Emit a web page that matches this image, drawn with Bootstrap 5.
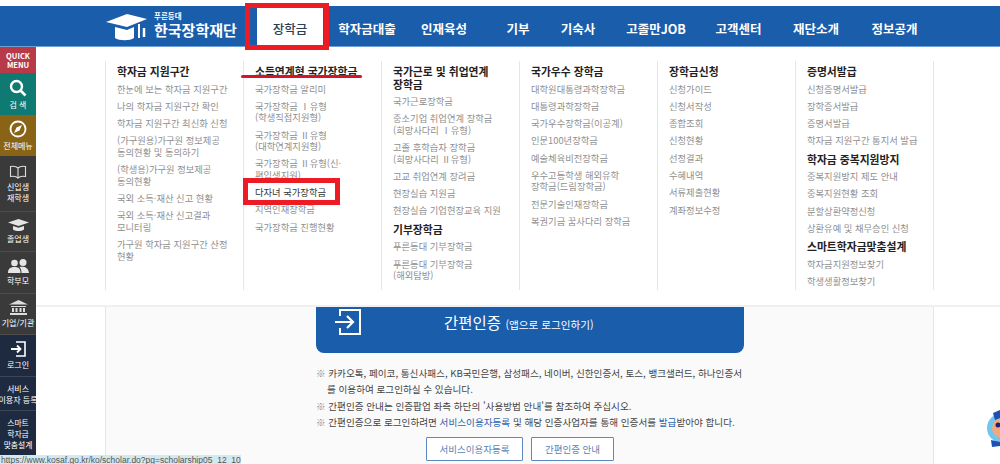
<!DOCTYPE html>
<html lang="ko">
<head>
<meta charset="utf-8">
<title>한국장학재단</title>
<link href="https://cdn.jsdelivr.net/npm/bootstrap@5.3.0/dist/css/bootstrap.min.css" rel="stylesheet">
<style>
html,body{height:464px;overflow:hidden;background:#fff}
body{font-family:"Noto Sans CJK KR","Noto Sans",sans-serif;color:#333}
.ks-top{height:41px;margin-top:6px;background:#1a5dab;border-bottom:1px solid #6f9fd8}
.ks-logo{width:257px;padding-left:106px;color:#fff}
.ks-logo-sub{font-size:7.500px;font-weight:700;line-height:7px;margin-top:6px}
.ks-logo-main{font-size:15px;font-weight:700;line-height:16px;margin-top:3px;white-space:nowrap}
.ks-gnb{display:grid;grid-template-columns:66px 88px 66px 82px 38px 118px 47px 108px 49px}
.ks-gnb a{color:#fff;font-size:12.500px;font-weight:700;text-decoration:none;text-align:center;line-height:46px;white-space:nowrap}
.ks-gnb a.ks-on{background:#fff;color:#2c3e55;font-weight:500}
.ks-side{width:36px;height:408px;flex:none}
.ks-side a{display:flex;flex-direction:column;align-items:center;justify-content:center;color:#fff;text-decoration:none;font-size:8px;line-height:11px;text-align:center;white-space:nowrap;border-bottom:1px solid #4c4c4c}
.ks-q{height:26px;background:#b83a49;font-weight:700;font-size:7.500px!important;line-height:9px!important;border:0!important}
.ks-find{height:42px;background:#0f7a72;border:0!important}
.ks-all{height:41px;background:#8a6416;border:0!important}
.ks-d1{height:56px;background:#3a3a3a}
.ks-d2{height:40px;background:#3a3a3a}
.ks-d3{height:42px;background:#3a3a3a}
.ks-d4{height:41px;background:#3a3a3a}
.ks-n1{height:42px;background:#1e2a40;border-color:#3b4658!important}
.ks-n2{height:34px;background:#1e2a40;border-color:#3b4658!important}
.ks-n3{height:44px;background:#1e2a40;border:0!important;font-size:7.800px!important}
.ks-side svg{display:block;margin-bottom:2px}
.ks-main{width:964px;flex:none}
.ks-mega{height:260px;padding:14px 0 0 69px;border-bottom:2px solid #f0f0f0}
.ks-col{width:138px;height:229px;flex:none;padding:4px 4px 0 11px;border-left:1px solid #e6e6e6;font-size:9.300px;line-height:11.500px;color:#8f8f8f}
.ks-col:last-child{border-right:1px solid #e6e6e6;width:139px}
.ks-col h6{font-size:10.800px;font-weight:700;line-height:12.500px;color:#222;margin:0 0 6px;white-space:nowrap}
.ks-col li{margin-bottom:5.800px;white-space:nowrap}
.ks-col li.ks-dark{color:#333}
.ks-body{margin-left:69px;width:829px;height:157px;background:#fafafa;border-left:1px solid #e6e6e6;border-right:1px solid #e6e6e6;padding-left:210px}
.ks-cert{width:428px;height:46px;background:#1a5dab;border-radius:0 0 8px 8px;color:#fff;padding-left:18px;text-decoration:none}
.ks-cert-t{font-size:15.500px;margin-left:82px;line-height:20px;margin-bottom:13px}
.ks-cert-t span{font-size:10.600px}
.ks-notes{width:440px;margin:12px 0 0;font-size:9.600px;line-height:16.300px;color:#444;white-space:nowrap}
.ks-notes li{padding-left:11px;text-indent:-11px}
.ks-notes i{font-style:normal;color:#888}
.ks-notes b{font-weight:400;color:#2a64b0}
.ks-btns{margin-top:7px;padding-left:110px}
.ks-btn{height:24px;padding:0;border:1px solid #5d88c0;border-radius:1px;background:#fff;color:#5a7fb5;font-size:9.500px;line-height:22px}
.ks-w1{width:97px}.ks-w2{width:83px}
.ks-red{position:absolute;border:5px solid #ed1c24;pointer-events:none}
.ks-r1{left:245px;top:3px;width:84px;height:47px}
.ks-r2{left:243px;top:178px;width:97px;height:27px}
.ks-line{position:absolute;left:241px;top:75px;width:121px;height:3px;background:#d8122a;border-radius:2px}
.ks-status{position:fixed;left:0;bottom:0;width:241px;height:9px;background:#d3e8ef;color:#555;font-size:8.500px;line-height:11px;padding-left:1px;overflow:hidden;white-space:nowrap;font-family:"Liberation Sans",sans-serif}
.ks-mascot{position:fixed;left:987px;top:410px}
</style>
</head>
<body>
<header class="ks-top d-flex">
  <div class="ks-logo d-flex">
    <svg width="44" height="30" viewBox="0 0 44 30" class="mt-2 me-1"><path d="M0 8 21 0l20 5-20 8z" fill="#fff"/><path d="M9 13v11c4 3 15 3 19 0V13l-7 3z" fill="#fff"/><path d="M33 10v14" stroke="#fff" stroke-width="2"/><path d="M38 14v9" stroke="#fff" stroke-width="2.500"/></svg>
    <div>
      <div class="ks-logo-sub">푸른등대</div>
      <div class="ks-logo-main">한국장학재단</div>
    </div>
  </div>
  <nav class="ks-gnb">
    <a class="ks-on" href="#">장학금</a><a href="#">학자금대출</a><a href="#">인재육성</a><a href="#">기부</a><a href="#">기숙사</a><a href="#">고졸만JOB</a><a href="#">고객센터</a><a href="#">재단소개</a><a href="#">정보공개</a>
  </nav>
</header>
<div class="d-flex">
  <aside class="ks-side">
    <a class="ks-q" href="#">QUICK<br>MENU</a>
    <a class="ks-find" href="#"><svg width="18" height="18" viewBox="0 0 18 18"><circle cx="7.500" cy="7.500" r="5.500" fill="none" stroke="#fff" stroke-width="2.400"/><path d="m11.500 11.500 5 5" stroke="#fff" stroke-width="2.600"/></svg>검 색</a>
    <a class="ks-all" href="#"><svg width="18" height="18" viewBox="0 0 18 18"><circle cx="9" cy="9" r="7.500" fill="none" stroke="#fff" stroke-width="1.800"/><path d="M13 5 10.500 10.500 5 13l2.500-5.500z" fill="#fff"/></svg>전체메뉴</a>
    <a class="ks-d1" href="#"><svg width="18" height="14" viewBox="0 0 18 14"><path d="M9 3C7 1 4 1 1.500 1.500v10C4 11 7 11 9 13c2-2 5-2 7.500-1.500v-10C14 1 11 1 9 3zm0 0v10" fill="none" stroke="#ddd" stroke-width="1.100"/></svg>신입생<br>재학생</a>
    <a class="ks-d2" href="#"><svg width="21" height="12" viewBox="0 0 21 12"><path d="M0 3.500 10.500 0 21 3.500 10.500 7z" fill="#e5e5e5"/><path d="M5 7v3.500c3 2 8 2 11 0V7l-5.500 1.800z" fill="#e5e5e5"/></svg>졸업생</a>
    <a class="ks-d3" href="#"><svg width="21" height="14" viewBox="0 0 21 14"><circle cx="6.500" cy="4" r="3.300" fill="#e5e5e5"/><circle cx="15" cy="3.500" r="3.500" fill="#e5e5e5"/><path d="M0 14c0-4 2-6 6.500-6s6 2 6 6zM13.500 14c0-3-1-5-2-6 4-1 9 0 9.500 6z" fill="#e5e5e5"/></svg>학부모</a>
    <a class="ks-d4" href="#"><svg width="19" height="15" viewBox="0 0 19 15"><path d="M9.500 0 19 4.500H0z" fill="#ddd"/><path d="M2 6h15v1H2zM3 8h2v4H3zM6.500 8h2v4h-2zM10.500 8h2v4h-2zM14 8h2v4h-2zM1 13h17v2H1z" fill="#ddd"/></svg>기업/기관</a>
    <a class="ks-n1" href="#"><svg width="15" height="16" viewBox="0 0 15 16"><path d="M5 1h9v14H5" fill="none" stroke="#fff" stroke-width="1.600"/><path d="M0 8h9M6 4.500 9.500 8 6 11.500" fill="none" stroke="#fff" stroke-width="1.800"/></svg>로그인</a>
    <a class="ks-n2" href="#">서비스<br>이용자 등록</a>
    <a class="ks-n3" href="#">스마트<br>학자금<br>맞춤설계</a>
  </aside>
  <main class="ks-main">
    <section class="ks-mega d-flex">
      <div class="ks-col">
        <h6>학자금 지원구간</h6>
        <ul class="list-unstyled mb-0">
          <li>한눈에 보는 학자금 지원구간</li>
          <li>나의 학자금 지원구간 확인</li>
          <li>학자금 지원구간 최신화 신청</li>
          <li>(가구원용)가구원 정보제공<br>동의현황 및 동의하기</li>
          <li>(학생용)가구원 정보제공<br>동의현황</li>
          <li>국외 소득·재산 신고 현황</li>
          <li>국외 소득·재산 신고결과<br>모니터링</li>
          <li>가구원 학자금 지원구간 산정<br>현황</li>
        </ul>
      </div>
      <div class="ks-col">
        <h6>소득연계형 국가장학금</h6>
        <ul class="list-unstyled mb-0">
          <li>국가장학금 알리미</li>
          <li>국가장학금 Ⅰ유형<br>(학생직접지원형)</li>
          <li>국가장학금 Ⅱ유형<br>(대학연계지원형)</li>
          <li>국가장학금 Ⅱ유형(신·<br>편입생지원)</li>
          <li class="ks-dark">다자녀 국가장학금</li>
          <li>지역인재장학금</li>
          <li>국가장학금 진행현황</li>
        </ul>
      </div>
      <div class="ks-col">
        <h6>국가근로 및 취업연계<br>장학금</h6>
        <ul class="list-unstyled mb-0">
          <li>국가근로장학금</li>
          <li>중소기업 취업연계 장학금<br>(희망사다리 Ⅰ유형)</li>
          <li>고졸 후학습자 장학금<br>(희망사다리 Ⅱ유형)</li>
          <li>고교 취업연계 장려금</li>
          <li>현장실습 지원금</li>
          <li>현장실습 기업현장교육 지원</li>
        </ul>
        <h6>기부장학금</h6>
        <ul class="list-unstyled mb-0">
          <li>푸른등대 기부장학금</li>
          <li>푸른등대 기부장학금<br>(해외탐방)</li>
        </ul>
      </div>
      <div class="ks-col">
        <h6>국가우수 장학금</h6>
        <ul class="list-unstyled mb-0">
          <li>대학원대통령과학장학금</li>
          <li>대통령과학장학금</li>
          <li>국가우수장학금(이공계)</li>
          <li>인문100년장학금</li>
          <li>예술체육비전장학금</li>
          <li>우수고등학생 해외유학<br>장학금(드림장학금)</li>
          <li>전문기술인재장학금</li>
          <li>복권기금 꿈사다리 장학금</li>
        </ul>
      </div>
      <div class="ks-col">
        <h6>장학금신청</h6>
        <ul class="list-unstyled mb-0">
          <li>신청가이드</li>
          <li>신청서작성</li>
          <li>종합조회</li>
          <li>신청현황</li>
          <li>선정결과</li>
          <li>수혜내역</li>
          <li>서류제출현황</li>
          <li>계좌정보수정</li>
        </ul>
      </div>
      <div class="ks-col">
        <h6>증명서발급</h6>
        <ul class="list-unstyled mb-0">
          <li>신청증명서발급</li>
          <li>장학증서발급</li>
          <li>증명서발급</li>
          <li>학자금 지원구간 통지서 발급</li>
        </ul>
        <h6>학자금 중복지원방지</h6>
        <ul class="list-unstyled mb-0">
          <li>중복지원방지 제도 안내</li>
          <li>중복지원현황 조회</li>
          <li>분할상환약정신청</li>
          <li>상환유예 및 채무승인 신청</li>
        </ul>
        <h6>스마트학자금맞춤설계</h6>
        <ul class="list-unstyled mb-0">
          <li>학자금지원정보찾기</li>
          <li>학생생활정보찾기</li>
        </ul>
      </div>
    </section>
    <section class="ks-body">
      <a class="ks-cert d-flex align-items-center" href="#">
        <svg width="28" height="26" viewBox="0 0 28 26" class="mb-3"><path d="M6 7V1h20v24H6v-6" fill="none" stroke="#fff" stroke-width="2"/><path d="M1 13h17M13 7l6 6-6 6" fill="none" stroke="#fff" stroke-width="2.200"/></svg>
        <div class="ks-cert-t">간편인증 <span>(앱으로 로그인하기)</span></div>
      </a>
      <ul class="ks-notes list-unstyled">
        <li><i>※</i> 카카오톡, 페이코, 통신사패스, KB국민은행, 삼성패스, 네이버, 신한인증서, 토스, 뱅크샐러드, 하나인증서<br>를 이용하여 로그인하실 수 있습니다.</li>
        <li><i>※</i> 간편인증 안내는 인증팝업 좌측 하단의 '사용방법 안내'를 참조하여 주십시오.</li>
        <li><i>※</i> 간편인증으로 로그인하려면 <b>서비스이용자등록</b> 및 해당 인증사업자를 통해 인증서를 <b>발급</b>받아야 합니다.</li>
      </ul>
      <div class="ks-btns d-flex gap-2">
        <button type="button" class="btn ks-btn ks-w1">서비스이용자등록</button>
        <button type="button" class="btn ks-btn ks-w2">간편인증 안내</button>
      </div>
    </section>
  </main>
</div>
<div class="ks-red ks-r1"></div>
<div class="ks-line"></div>
<div class="ks-red ks-r2"></div>
<svg class="ks-mascot" width="13" height="37" viewBox="0 0 13 37"><circle cx="15" cy="18" r="15" fill="#6fc6ee"/><circle cx="15" cy="18" r="10" fill="#f4a77c"/><path d="M6 3 13 0v8L8 10zM4 30l9 2v4l-8 1z" fill="#1d50b0"/><circle cx="11" cy="15" r="2.500" fill="#1c2470"/></svg>
<div class="ks-status">https://www.kosaf.go.kr/ko/scholar.do?pg=scholarship05_12_10</div>
</body>
</html>
